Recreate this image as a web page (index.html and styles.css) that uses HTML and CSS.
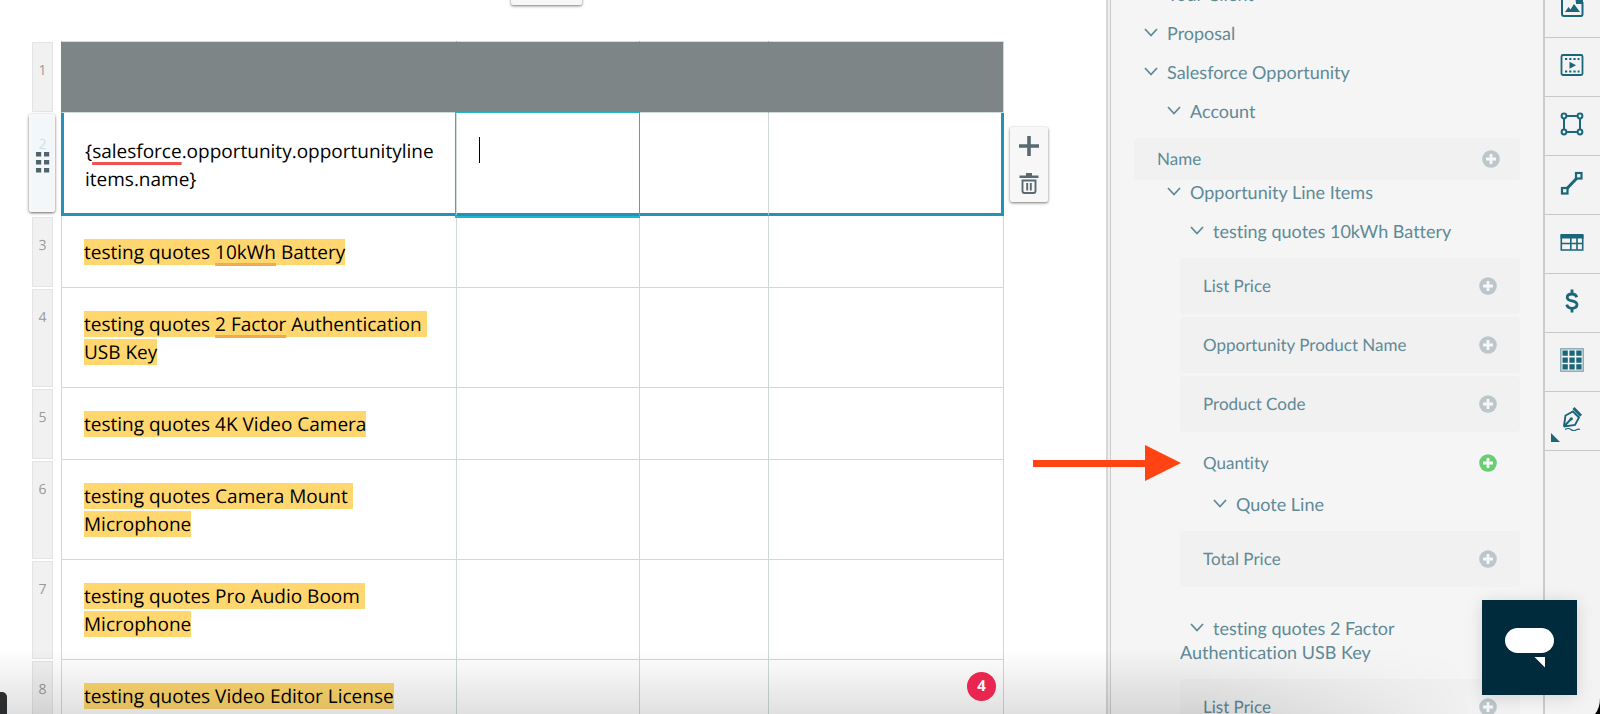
FILE: index.html
```html
<!DOCTYPE html>
<html lang="en">
<head>
<meta charset="utf-8">
<title>Proposal editor</title>
<link rel="stylesheet" href="styles.css">
</head>
<body>
<svg class="defs" aria-hidden="true">
  <symbol id="chev" viewBox="0 0 14 9"><path d="M1 1l6 6.500 6-6.500" fill="none" stroke="currentColor" stroke-width="1.800"/></symbol>
  <symbol id="add" viewBox="0 0 18 18"><circle cx="9" cy="9" r="8.800" fill="currentColor"/><path d="M9 4v10M4 9h10" stroke="#f8f8f8" stroke-width="2.800"/></symbol>
</svg>
<div class="app">
  <main class="canvas">
    <div class="tab-handle"></div>
    <table class="grid">
      <colgroup><col class="c-num"><col class="c-name"><col class="c-two"><col class="c-three"><col></colgroup>
      <tbody>
        <tr class="head"><th scope="row">1</th><td></td><td></td><td></td><td></td></tr>
        <tr class="active">
          <th scope="row">2
            <button class="drag" aria-label="Move row"><svg width="14" height="22" viewBox="0 0 14 22"><path d="M0 0h5.200v4.500H0zM8 0h5.200v4.500H8zM0 8h5.200v4.500H0zM8 8h5.200v4.500H8zM0 16h5.200v4.500H0zM8 16h5.200v4.500H8z" fill="#4f646b"/></svg></button>
          </th>
          <td>{<span class="typo">salesforce</span>.opportunity.opportunityline<br>items.name}</td>
          <td class="editing"><span class="caret"></span></td><td></td><td></td>
        </tr>
        <tr><th scope="row">3</th><td><mark>testing quotes <span class="warn">10kWh</span> Battery</mark></td><td></td><td></td><td></td></tr>
        <tr><th scope="row">4</th><td><mark>testing quotes <span class="warn">2 Factor</span> Authentication&nbsp;<br>USB Key</mark></td><td></td><td></td><td></td></tr>
        <tr><th scope="row">5</th><td><mark>testing quotes 4K Video Camera</mark></td><td></td><td></td><td></td></tr>
        <tr><th scope="row">6</th><td><mark>testing quotes Camera Mount&nbsp;<br>Microphone</mark></td><td></td><td></td><td></td></tr>
        <tr><th scope="row">7</th><td><mark>testing quotes Pro Audio Boom&nbsp;<br>Microphone</mark></td><td></td><td></td><td></td></tr>
        <tr><th scope="row">8</th><td><mark>testing quotes Video Editor License</mark></td><td></td><td></td><td></td></tr>
      </tbody>
    </table>
    <div class="row-tools">
      <button aria-label="Add row"><svg width="20" height="20" viewBox="0 0 20 20"><path d="M10 0v20M0 10h20" stroke="#5a6a72" stroke-width="3.600"/></svg></button>
      <button aria-label="Delete row"><svg width="20" height="22" viewBox="0 0 20 22"><path d="M7 0h6v2.500h6.500V5H.500V2.500H7z" fill="#5a6a72"/><path d="M3.500 7.500h13v10.500q0 2-2 2h-9q-2 0-2-2zM8.200 10v7.500M11.800 10v7.500" fill="none" stroke="#5a6a72" stroke-width="1.900"/></svg></button>
    </div>
  </main>
  <div class="splitter"></div>
  <aside class="panel">
    <button class="node l1"><svg class="chev"><use href="#chev"/></svg>Your Client</button>
    <button class="node l1"><svg class="chev"><use href="#chev"/></svg>Proposal</button>
    <button class="node l1"><svg class="chev"><use href="#chev"/></svg>Salesforce Opportunity</button>
    <button class="node l2"><svg class="chev"><use href="#chev"/></svg>Account</button>
    <div class="field slim"><span>Name</span><button aria-label="Add Name"><svg><use href="#add"/></svg></button></div>
    <button class="node l2"><svg class="chev"><use href="#chev"/></svg>Opportunity Line Items</button>
    <button class="node l3"><svg class="chev"><use href="#chev"/></svg>testing quotes 10kWh Battery</button>
    <div class="fields">
      <div class="field"><span>List Price</span><button aria-label="Add List Price"><svg><use href="#add"/></svg></button></div>
      <div class="field"><span>Opportunity Product Name</span><button aria-label="Add Opportunity Product Name"><svg><use href="#add"/></svg></button></div>
      <div class="field"><span>Product Code</span><button aria-label="Add Product Code"><svg><use href="#add"/></svg></button></div>
      <div class="field hover"><span>Quantity</span><button aria-label="Add Quantity"><svg><use href="#add"/></svg></button></div>
    </div>
    <button class="node l4"><svg class="chev"><use href="#chev"/></svg>Quote Line</button>
    <div class="fields last">
      <div class="field"><span>Total Price</span><button aria-label="Add Total Price"><svg><use href="#add"/></svg></button></div>
    </div>
    <button class="node l3"><svg class="chev"><use href="#chev"/></svg>testing quotes 2 Factor Authentication USB Key</button>
    <div class="fields">
      <div class="field"><span>List Price</span><button aria-label="Add List Price"><svg><use href="#add"/></svg></button></div>
    </div>
  </aside>
  <nav class="rail" aria-label="Content blocks">
    <button aria-label="Image"><svg viewBox="0 0 24 24"><path d="M16 2H4Q2 2 2 4v16q0 2 2 2h17q1.500 0 1.500-2V9H17z" fill="none" stroke="currentColor" stroke-width="2"/><path d="M5 18l3.500-5 2 2.500L14 10l6 8zM17 3h6v7h-6z" fill="currentColor"/></svg></button>
    <button aria-label="Video"><svg viewBox="0 0 24 24"><rect x="1.500" y="2" width="21" height="20" rx="1.500" fill="none" stroke="currentColor" stroke-width="1.800"/><path d="M5 6h14.500M5 18.500h14.500" stroke="currentColor" stroke-width="2" stroke-dasharray="2.200 2"/><path d="M9.500 8.700l6.500 3.500-6.500 3.500z" fill="currentColor"/></svg></button>
    <button aria-label="Shape"><svg viewBox="0 0 24 24"><g fill="none" stroke="currentColor" stroke-width="2"><path d="M6 4h12M6 20h12M4 6.500v11M20 6.500v11"/><circle cx="4" cy="4" r="2.400"/><circle cx="20" cy="4" r="2.400"/><circle cx="4" cy="20" r="2.400"/><circle cx="20" cy="20" r="2.400"/></g></svg></button>
    <button aria-label="Line"><svg viewBox="0 0 24 24"><g fill="none" stroke="currentColor" stroke-width="2.200"><path d="M7 17.500L17 7" stroke-width="3"/><rect x="2" y="17" width="5.500" height="5.500"/><rect x="16" y="2" width="5.500" height="5.500"/></g></svg></button>
    <button aria-label="Table"><svg viewBox="0 0 24 24"><path d="M.500 4h23v4.500H.500z" fill="currentColor"/><path d="M1.300 5v15h21.400V5M1.500 13.500h21M10.800 8v12M17 8v12" fill="none" stroke="currentColor" stroke-width="1.600"/></svg></button>
    <button aria-label="Pricing"><svg viewBox="0 0 24 24"><path d="M16.800 8.200C16 6 14.300 5 12 5 9 5 7.200 6.300 7.200 8.400c0 4.700 9.800 2.200 9.800 7.200 0 2.300-2 3.700-5 3.700-2.800 0-4.700-1.200-5.300-3.600M12 0.500V5M12 19v4.500" fill="none" stroke="currentColor" stroke-width="2.800"/></svg></button>
    <button aria-label="Grid"><svg viewBox="0 0 24 24"><rect x=".8" y=".8" width="22.400" height="22.400" fill="none" stroke="#7ba1ae" stroke-width="1.300"/><path d="M2.500 2.500h5.300v5.300H2.500zM9.400 2.500h5.300v5.300H9.400zM16.300 2.500h5.300v5.300h-5.300zM2.500 9.400h5.300v5.300H2.500zM9.400 9.400h5.300v5.300H9.400zM16.300 9.400h5.300v5.300h-5.300zM2.500 16.300h5.300v5.300H2.500zM9.400 16.300h5.300v5.300H9.400zM16.300 16.300h5.300v5.300h-5.300z" fill="currentColor"/></svg></button>
    <button class="more" aria-label="Signature"><svg viewBox="0 0 24 24"><path d="M4 19L5.500 8.500 13 4.500l6 6-4 7.500L4.500 19.500zM5 18.500l6-6.500" fill="none" stroke="currentColor" stroke-width="1.900"/><circle cx="11.300" cy="11.800" r="1.600" fill="currentColor"/><path d="M13.500 1l7.500 7.800" stroke="currentColor" stroke-width="2.800"/><path d="M5 22.500q3.500-2 6 0t5 .5 4-.5" fill="none" stroke="currentColor" stroke-width="1.100"/></svg></button>
  </nav>
</div>
<div class="fade"></div>
<div class="dock"></div>
<span class="badge">4</span>
<svg class="arrow" viewBox="0 0 148 36" aria-hidden="true"><path d="M0 15h112V0l36 18-36 18V22H0z" fill="#ff4312"/></svg>
<button class="chat" aria-label="Open chat"><svg width="49" height="40" viewBox="0 0 49 40"><rect width="49" height="25" rx="12.500" fill="#fff"/><path d="M29.500 29H40v10.500z" fill="#fff"/></svg></button>
<svg class="corner" viewBox="0 0 16 16" aria-hidden="true"><path d="M16 0v16h-5Q16 10 16 0z" fill="#000"/></svg>
</body>
</html>
```
FILE: styles.css
```css
* { box-sizing: border-box; }
body {
  margin: 0;
  height: 100vh;
  overflow: hidden;
  position: relative;
  background: #fff;
  font-family: "Open Sans", "Noto Sans", sans-serif;
  text-rendering: geometricPrecision;
  font-variant-ligatures: none;
}
button { margin: 0; padding: 0; border: 0; background: none; font: inherit; font-variant-ligatures: none; text-rendering: inherit; color: inherit; }
svg { display: block; }
.defs { position: absolute; width: 0; height: 0; }
.app { display: flex; height: 100%; overflow: hidden; }

/* document canvas */
.canvas { flex: 1; min-width: 0; position: relative; padding: 41px 102px 0 32px; }
.tab-handle {
  position: absolute; top: -20px; left: 511px; width: 71px; height: 25px;
  background: #f7f7f7; border-radius: 2px; box-shadow: 0 1px 3px #0008;
}
.grid {
  width: 100%; table-layout: fixed; border-collapse: separate; border-spacing: 0;
  font-size: 19px; line-height: 28px; color: #000;
}
.c-num { width: 29px; }
.c-name { width: 395px; }
.c-two { width: 183px; }
.c-three { width: 129px; }
.grid tr { height: 72px; }
.grid td {
  padding: 22px 0 21px 22px; vertical-align: top; white-space: nowrap;
  border-left: 1px solid #cfd9d9; border-bottom: 1px solid #cfd9d9;
}
.grid td:last-child { border-right: 1px solid #cfd9d9; }
.grid th {
  padding: 15px 0 0; vertical-align: top; text-align: center;
  font-size: 14px; font-weight: 400; color: #999;
  background: #f1f1f1; background-clip: padding-box;
  border: 0 solid transparent; border-width: 1px 8px 1px 0;
  box-shadow: inset 0 0 0 1px #e4e4e4;
}
.grid .head td { background: #7e8587; border-left-color: #7e8587; border-top: 1px solid #d5dddd; }
.grid .active { height: 103px; }
.grid .active td { padding-top: 24px; padding-bottom: 20px; border-bottom: 3px solid #2491b8; }
.grid .active td:nth-child(2) { border-left: 3px solid #2491b8; padding-left: 21px; }
.grid .active td:last-child { border-right: 3px solid #2491b8; }
.grid .active th { position: relative; padding-top: 17px; color: #a9d3e2; background: none; box-shadow: none; }
.drag {
  position: absolute; inset: 0 -2px 3px -3px; display: flex; align-items: center; justify-content: center;
  border-radius: 3px; border: solid #f8f8f8; border-width: 2px 1px 2px 3px; box-shadow: 0 1px 3px #0009; background: #eaf0f380;
}
.grid .active .editing { position: relative; }
.editing::after {
  content: ""; position: absolute; inset: -1px -1px -5px -2px;
  border: 1px solid #1fb6cf; border-bottom-width: 2px;
}
.caret { display: block; width: 1px; height: 26px; background: #000; }
mark { color: inherit; background: #ffd76e; }
.typo, .warn { text-decoration: underline 3px #ef5350; text-underline-offset: 4px; text-decoration-skip-ink: none; }
.warn { text-decoration-color: #f0aa48; }
.row-tools {
  position: absolute; top: 127px; right: 58px; width: 38px; height: 75px;
  display: flex; flex-direction: column; align-items: center; gap: 17px; padding-top: 9px;
  background: #f7f7f7; border-radius: 2px; box-shadow: 0 1px 3px #0008;
}

/* data panel */
.splitter { flex: none; width: 5px; background: #efefef; border: solid #ccc; border-width: 0 1px; border-left: 2px solid #d5d8d8; }
.panel {
  flex: none; width: 432px; background: #f5f5f5; padding: 0 23px; color: #5f8a97;
  font-family: Lato, "Open Sans", sans-serif; font-size: 18px; line-height: 24px;
  display: flex; flex-direction: column;
  margin-top: -18px;
}
.panel > * { flex: none; }
.node { text-align: left; margin-bottom: 15px; }
.chev { display: inline-block; width: 14px; height: 9px; margin: 0 9px 3px 10px; }
.l2 { margin-left: 23px; }
.l3 { margin-left: 46px; padding-right: 23px; }
.l4 { margin-left: 69px; }
.fields { display: flex; flex-direction: column; gap: 3px; margin: 0 0 1px 46px; }
.fields.last { margin-bottom: 29px; }
.field {
  display: flex; align-items: center; justify-content: space-between; height: 56px;
  padding: 0 23px; border-radius: 4px; background: #f1f1f1; font-size: 17px;
}
.field.slim { height: 42px; padding-right: 20px; }
.field.hover { background: none; }
.field button { color: #bcc6cb; }
.field.hover button { color: #68ce74; }
.field svg { width: 18px; height: 18px; }

/* tool rail */
.rail { flex: none; width: 57px; background: #f3f3f3; border-left: 2px solid #ccc; color: #1b667b; margin-top: -21px; }
.rail button {
  display: flex; align-items: center; justify-content: center; width: 100%; height: 59px;
  border-bottom: 1px solid #c8c8c8; padding: 0 2px 4px 0; position: relative;
}
.rail svg { width: 24px; height: 24px; }
.rail .more::after {
  content: ""; position: absolute; left: 6px; bottom: 8px;
  width: 9px; height: 9px; background: #1b667b; clip-path: polygon(0 0, 100% 100%, 0 100%);
}

/* overlays */
.fade {
  position: absolute; inset: auto 0 0 0; height: 64px; pointer-events: none;
  background: linear-gradient(transparent, #0000001f);
  mask-image: linear-gradient(90deg, #000 75%, transparent 92%);
}
.dock { position: absolute; left: 0; bottom: 0; width: 7px; height: 22px; background: #2c2d2f; border-radius: 0 5px 0 0; }
.badge {
  position: absolute; left: 967px; bottom: 13px; width: 29px; height: 29px; border-radius: 50%;
  background: #e8264f; color: #fff; font-size: 15px; font-weight: 700; line-height: 29px; text-align: center;
}
.arrow { position: absolute; left: 1033px; top: 445px; width: 148px; height: 36px; }
.chat {
  position: absolute; right: 23px; bottom: 19px; width: 95px; height: 95px; background: #002b3c;
  display: flex; align-items: center; justify-content: center; box-shadow: 0 2px 16px #0002;
}
.corner { position: absolute; right: 0; bottom: 0; width: 16px; height: 16px; }
```
